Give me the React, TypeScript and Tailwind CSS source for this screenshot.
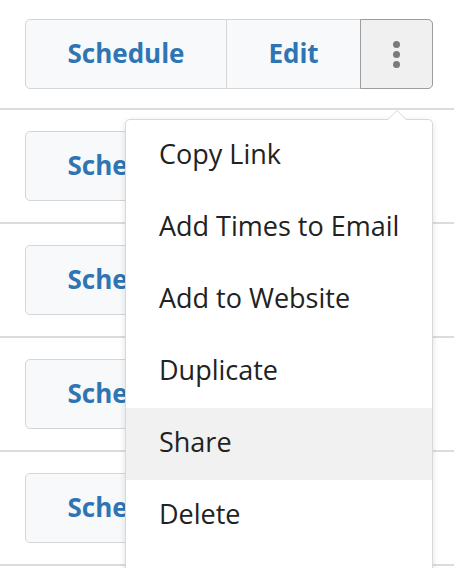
const items = ['Copy Link', 'Add Times to Email', 'Add to Website', 'Duplicate', 'Share', 'Delete']

function ButtonGroup({ active }: { active?: boolean }) {
  return (
    <div className="ml-[25px] flex h-[70px] w-[408px] rounded-[5px] border border-[#d6d6d6] bg-[#f7f9fb]">
      <button className="flex w-[200px] items-center justify-center pb-[2px] text-[26px] font-bold text-[#2e75b4]">Schedule</button>
      <button className="flex w-[134px] items-center justify-center border-l border-[#d6d6d6] pb-[2px] text-[26px] font-bold text-[#2e75b4]">
        Edit
      </button>
      <button
        className={
          active
            ? '-my-px -mr-px flex flex-1 flex-col items-center justify-center gap-[3px] rounded-r-[5px] border border-[#9d9d9d] bg-[#f0f0f0]'
            : 'flex flex-1 flex-col items-center justify-center gap-[3px] border-l border-[#d6d6d6]'
        }
      >
        <span className="h-[7px] w-[7px] rounded-full bg-[#7a7a7a]" />
        <span className="h-[7px] w-[7px] rounded-full bg-[#7a7a7a]" />
        <span className="h-[7px] w-[7px] rounded-full bg-[#7a7a7a]" />
      </button>
    </div>
  )
}

export default function App() {
  return (
    <div className="relative h-[568px] w-full overflow-hidden bg-white" style={{ fontFamily: '"Open Sans", Lato, sans-serif' }}>
      <div className="border-b-2 border-[#dcdcdc] pt-[19px] pb-[19px]">
        <ButtonGroup active />
      </div>
      {[0, 1, 2, 3].map((i) => (
        <div key={i} className="border-b-2 border-[#dcdcdc] py-[21px]">
          <ButtonGroup />
        </div>
      ))}

      <div className="absolute left-[125px] top-[119px] w-[308px] rounded-[5px] border border-[#d8d8d8] bg-white pb-[20px] shadow-[0_2px_6px_rgba(0,0,0,0.12)]">
        <div className="absolute -top-[10px] left-[261px] h-0 w-0 border-x-[10px] border-b-[10px] border-x-transparent border-b-[#d8d8d8]" />
        <div className="absolute -top-[9px] left-[262px] h-0 w-0 border-x-[9px] border-b-[9px] border-x-transparent border-b-white" />
        {items.map((t) => (
          <div
            key={t}
            className={`flex h-[72px] items-center pb-[3px] pl-[33px] text-[27px] text-[#222] ${t === 'Share' ? 'bg-[#f1f1f1]' : ''}`}
          >
            {t}
          </div>
        ))}
      </div>
    </div>
  )
}
